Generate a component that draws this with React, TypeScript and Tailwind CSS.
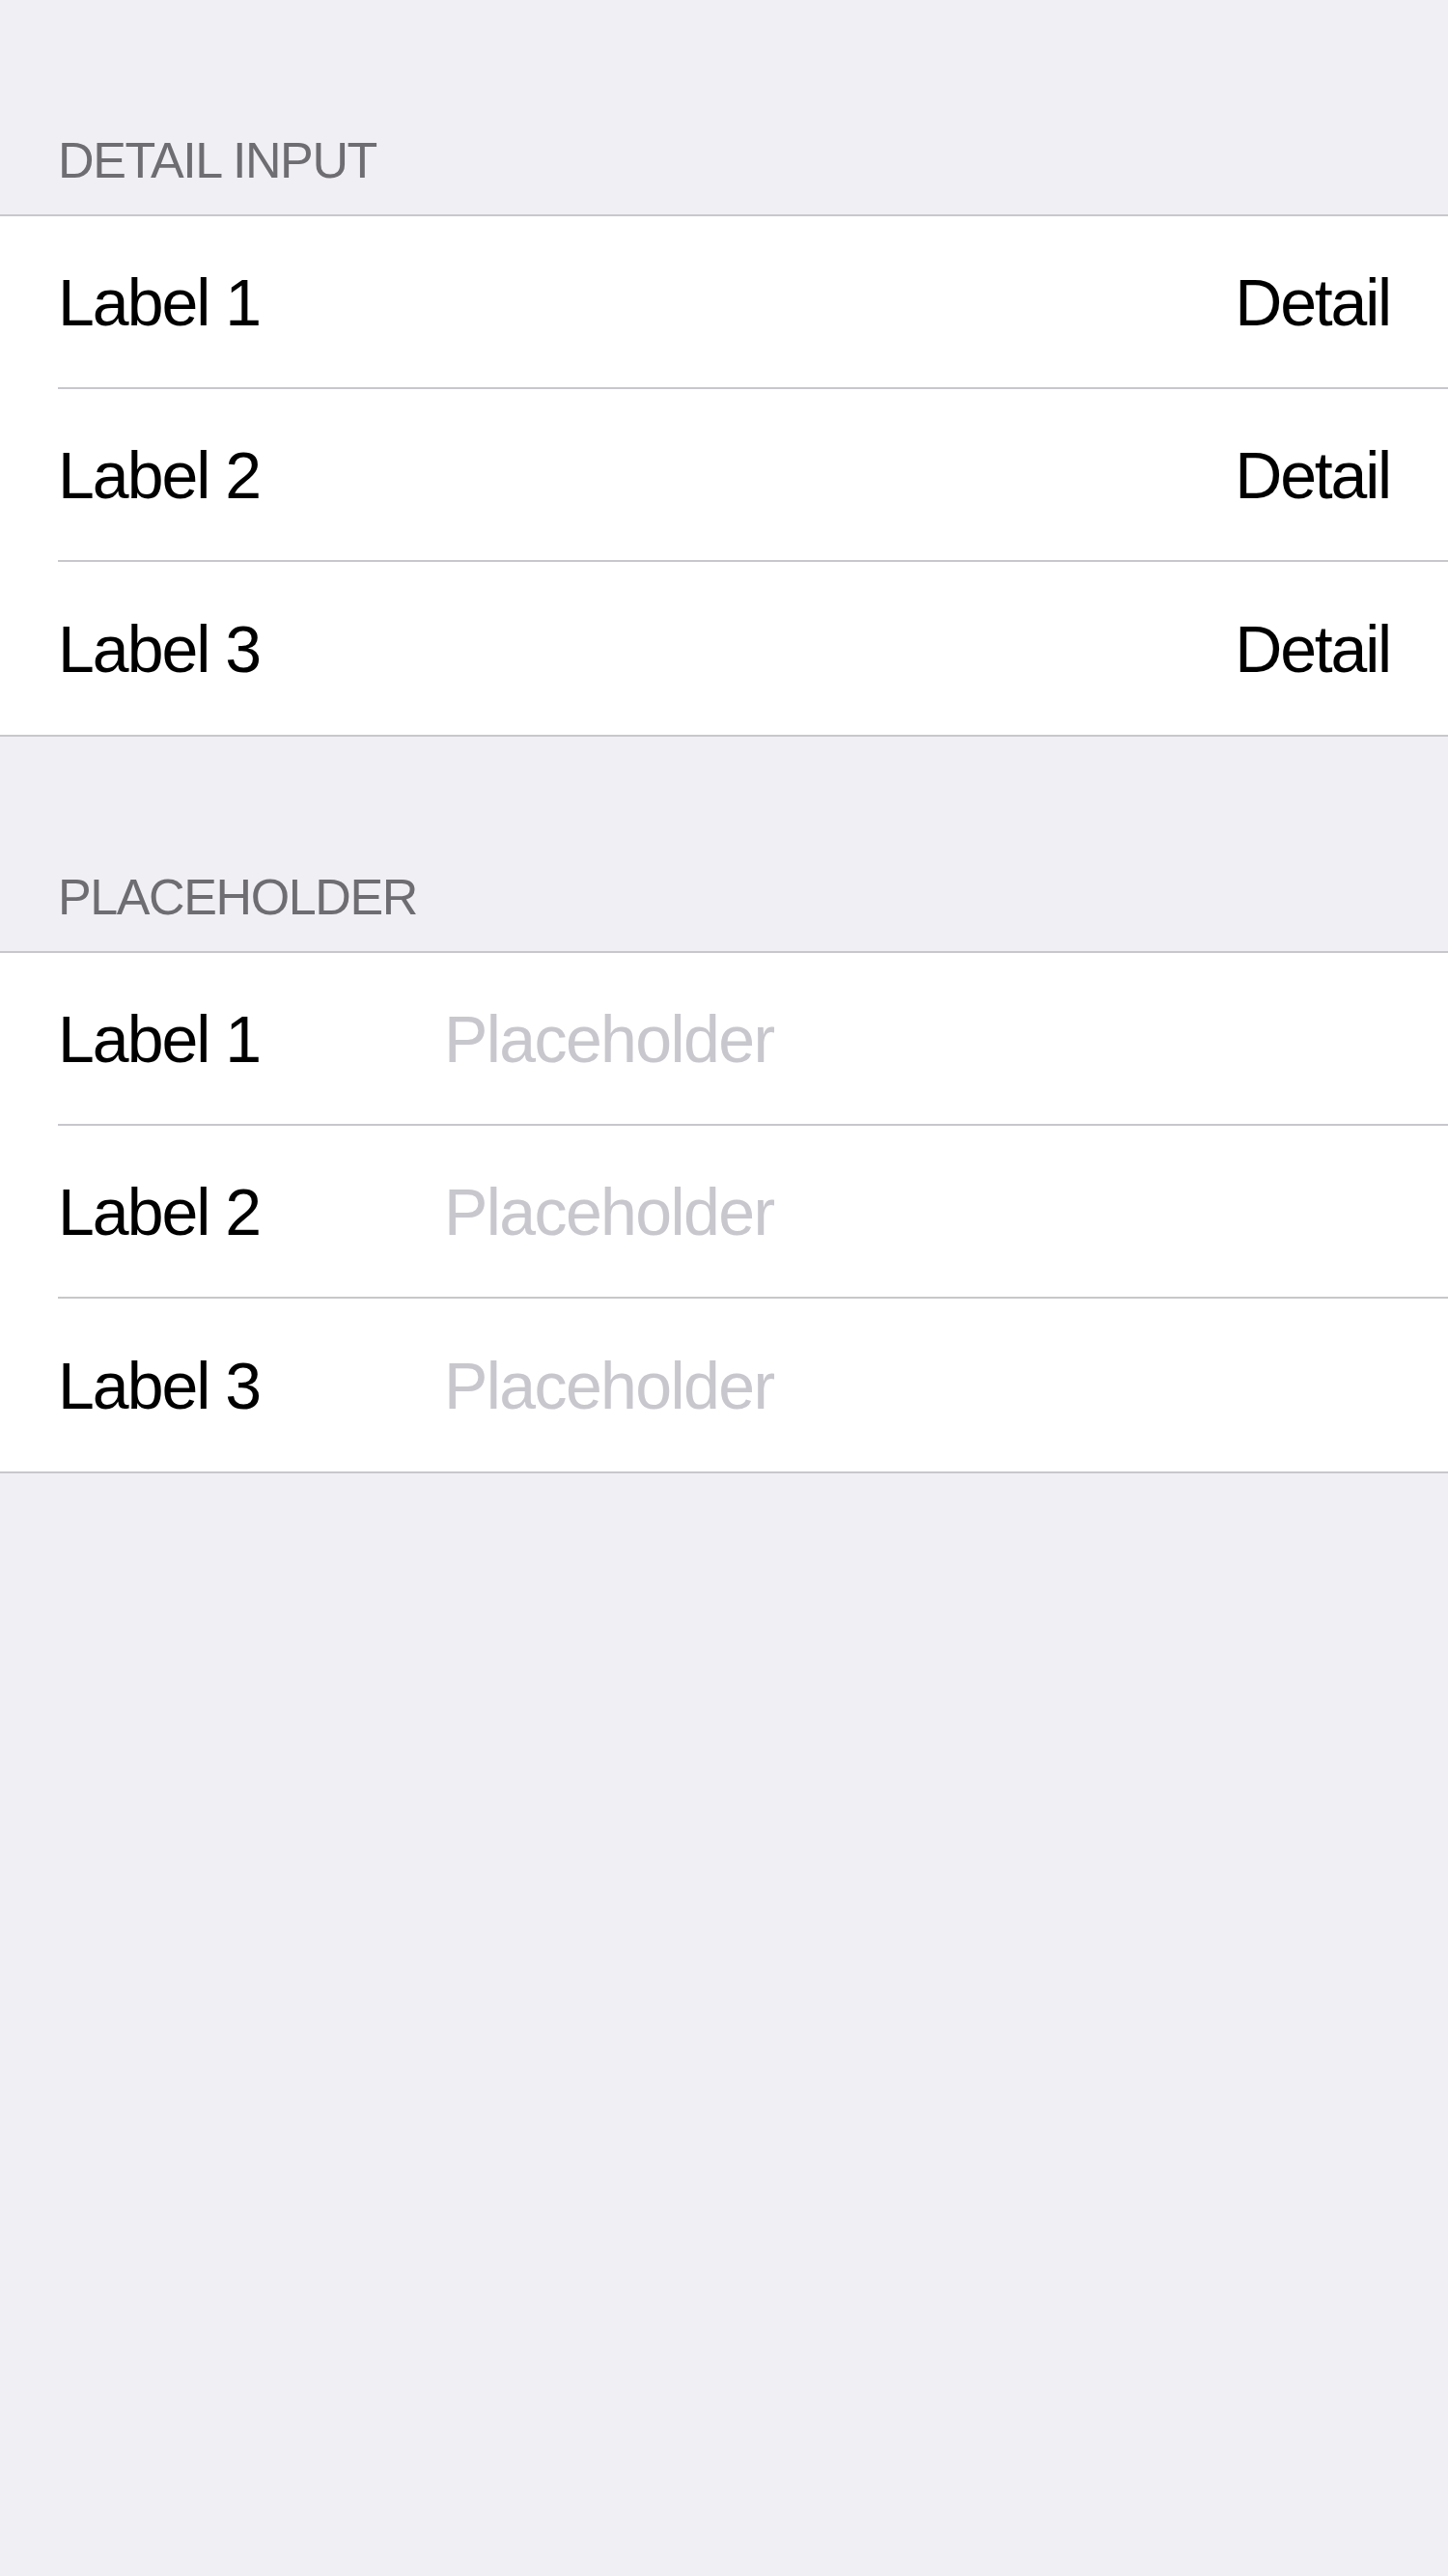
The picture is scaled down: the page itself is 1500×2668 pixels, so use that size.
import React from "react";

type Row = {
  label: string;
  detail?: string;
  placeholder?: string;
};

const detailRows: Row[] = [
  { label: "Label 1", detail: "Detail" },
  { label: "Label 2", detail: "Detail" },
  { label: "Label 3", detail: "Detail" },
];

const placeholderRows: Row[] = [
  { label: "Label 1", placeholder: "Placeholder" },
  { label: "Label 2", placeholder: "Placeholder" },
  { label: "Label 3", placeholder: "Placeholder" },
];

const Section = ({ title, rows }: { title: string; rows: Row[] }) => (
  <section>
    <div className="h-[222px] flex items-end px-[60px] pb-[30px]">
      <h2 className="text-[52px] leading-none tracking-[-1.4px] text-[#6d6d72] uppercase">
        {title}
      </h2>
    </div>

    <div className="bg-white border-y-2 border-[#c8c7cc] pl-[60px]">
      {rows.map((row, i) => (
        <div
          key={row.label}
          className={`h-[179px] flex items-center pr-[60px] ${
            i < rows.length - 1 ? "border-b-2 border-[#c8c7cc]" : ""
          }`}
        >
          <span className="w-[400px] shrink-0 text-[68px] leading-none tracking-[-2px] text-black">
            {row.label}
          </span>
          {row.placeholder && (
            <input
              type="text"
              placeholder={row.placeholder}
              className="flex-1 min-w-0 bg-transparent outline-none text-[68px] leading-none tracking-[-1.6px] text-black placeholder:text-[#c7c7cd]"
            />
          )}
          {row.detail && (
            <span className="ml-auto text-[68px] leading-none tracking-[-2.2px] text-black">
              {row.detail}
            </span>
          )}
        </div>
      ))}
    </div>
  </section>
);

export default function App() {
  return (
    <div
      className="min-h-[2668px] w-full bg-[#efeff4]"
      style={{ fontFamily: '"Liberation Sans", Arial, sans-serif' }}
    >
      <Section title="Detail Input" rows={detailRows} />
      <Section title="Placeholder" rows={placeholderRows} />
    </div>
  );
}
